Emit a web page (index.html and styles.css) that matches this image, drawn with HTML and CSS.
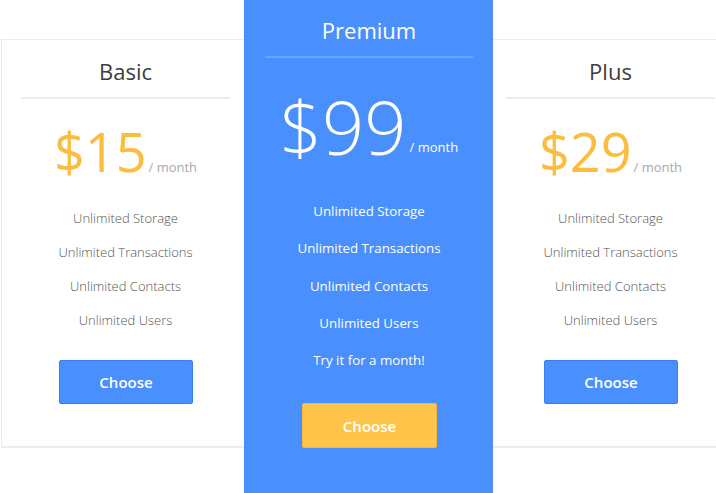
FILE: index.html
```html
<!DOCTYPE html>
<html lang="en">
<head>
<meta charset="utf-8">
<title>Pricing</title>
<link rel="stylesheet" href="styles.css">
</head>
<body>
<div class="pricing">
  <div class="plan plan-basic">
    <div class="plan-title">Basic</div>
    <div class="price"><span class="amount">$15</span><span class="per">/ month</span></div>
    <ul class="features">
      <li>Unlimited Storage</li>
      <li>Unlimited Transactions</li>
      <li>Unlimited Contacts</li>
      <li>Unlimited Users</li>
    </ul>
    <div class="action"><button class="btn">Choose</button></div>
  </div>
  <div class="plan plan-featured">
    <div class="plan-title">Premium</div>
    <div class="price"><span class="amount">$99</span><span class="per">/ month</span></div>
    <ul class="features">
      <li>Unlimited Storage</li>
      <li>Unlimited Transactions</li>
      <li>Unlimited Contacts</li>
      <li>Unlimited Users</li>
      <li>Try it for a month!</li>
    </ul>
    <div class="action"><button class="btn btn-yellow">Choose</button></div>
  </div>
  <div class="plan plan-plus">
    <div class="plan-title">Plus</div>
    <div class="price"><span class="amount">$29</span><span class="per">/ month</span></div>
    <ul class="features">
      <li>Unlimited Storage</li>
      <li>Unlimited Transactions</li>
      <li>Unlimited Contacts</li>
      <li>Unlimited Users</li>
    </ul>
    <div class="action"><button class="btn">Choose</button></div>
  </div>
</div>
</body>
</html>
```
FILE: styles.css
```css
html, body {
  margin: 0;
  padding: 0;
  background: #ffffff;
  overflow: hidden;
  width: 716px;
  height: 493px;
}

body {
  font-family: "Open Sans", "Liberation Sans", sans-serif;
}

.pricing {
  display: flex;
  align-items: flex-start;
  width: 760px;
}

.plan {
  box-sizing: border-box;
  flex: none;
  text-align: center;
}

.plan-basic,
.plan-plus {
  margin-top: 39px;
  border-top: 1px solid #ececec;
  border-bottom: 2px solid #ececec;
  background: #fff;
  padding-bottom: 42px;
}

.plan-basic {
  margin-left: 1px;
  width: 243px;
  border-left: 1px solid #ececec;
  padding-left: 19px;
  padding-right: 14px;
}

.plan-plus {
  width: 243px;
  padding-left: 13px;
  padding-right: 21px;
}

.plan-featured {
  width: 249px;
  height: 493px;
  background: #4a8ffe;
  padding-left: 21px;
  padding-right: 20px;
}

.plan-title {
  font-size: 22px;
  line-height: 30px;
  color: #3d3d3d;
  padding-top: 16px;
  padding-bottom: 11px;
  border-bottom: 2px solid #ececec;
}

.plan-featured .plan-title {
  color: #fff;
  padding-top: 15px;
  padding-bottom: 11px;
  border-bottom-color: #6aa3fe;
}

.price {
  display: flex;
  justify-content: center;
  align-items: baseline;
  margin-top: 25px;
}

.amount {
  font-size: 54px;
  line-height: 54px;
  font-weight: 500;
  color: #fbbd3d;
}

.per {
  font-size: 13px;
  line-height: 20px;
  color: #a9a9a9;
  margin-left: 2px;
}

.plan-featured .price {
  margin-top: 32px;
}

.plan-featured .amount {
  font-size: 74px;
  line-height: 74px;
  font-weight: 300;
  color: #fff;
}

.plan-featured .per {
  color: #fff;
  margin-left: 3px;
  position: relative;
  top: -3px;
}

.features {
  list-style: none;
  margin: 23px 0 0;
  padding: 0;
  font-size: 13px;
  line-height: 34px;
  font-weight: 300;
  color: #555;
}

.plan-featured .features {
  margin-top: 29px;
  font-size: 13.3px;
  line-height: 37.3px;
  font-weight: 400;
  color: #fff;
}

.action {
  margin-top: 23px;
  display: flex;
  justify-content: center;
}

.plan-featured .action {
  margin-top: 24px;
}

.btn {
  box-sizing: border-box;
  width: 134px;
  height: 44px;
  border: 1px solid #3a7ef2;
  border-radius: 2px;
  background: #4a8ffe;
  color: #fff;
  font-family: "Open Sans", "Liberation Sans", sans-serif;
  font-size: 15px;
  font-weight: 600;
  padding: 0;
  margin-left: 1px;
}

.btn-yellow {
  width: 135px;
  height: 45px;
  background: #ffc44a;
  border-color: #f3b73c;
}
```
